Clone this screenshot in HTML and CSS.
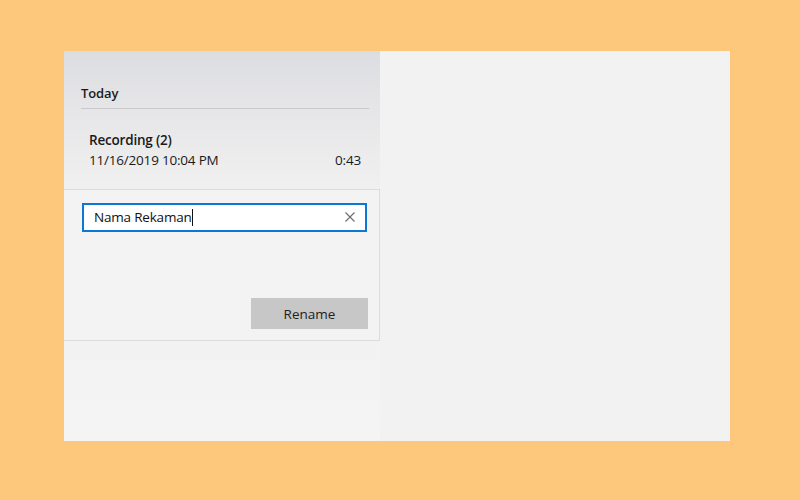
FILE: index.html
```html
<!DOCTYPE html>
<html lang="en">
<head>
    <meta charset="UTF-8">
    <title>Voice Recorder</title>
    <link rel="stylesheet" href="styles.css">
</head>
<body>
    <div class="window">
        <div class="sidebar">
            <div class="group-title">Today</div>
            <div class="recording">
                <div class="rec-name">Recording (2)</div>
                <div class="rec-meta">
                    <span>11/16/2019 10:04 PM</span>
                    <span>0:43</span>
                </div>
            </div>
        </div>
        <div class="main"></div>

        <div class="flyout">
            <div class="name-box">
                <span class="name-text">Nama Rekaman</span><span class="caret"></span>
                <svg class="clear" width="10" height="10" viewBox="0 0 10 10">
                    <path d="M0.5 0.5 L9.5 9.5 M9.5 0.5 L0.5 9.5" stroke="#6b6b6b" stroke-width="1.1"/>
                </svg>
            </div>
            <div class="actions">
                <button class="rename-btn">Rename</button>
            </div>
        </div>
    </div>
</body>
</html>
```

FILE: styles.css
```css
body {
    margin: 0;
    background-color: #fdc77c;
    font-family: "Segoe UI", "Open Sans", "Noto Sans", sans-serif;
    color: #1a1a1a;
}
.window {
    position: relative;
    display: flex;
    margin: 51px 0 0 64px;
    width: 666px;
    height: 390px;
    background: #f2f2f2;
}
.sidebar {
    width: 316px;
    background: linear-gradient(to bottom, #dcdde1 0px, #e6e6e8 60px, #f0f0f0 135px, #f4f4f4 390px);
    box-sizing: border-box;
    padding: 33px 11px 0 17px;
}
.main {
    flex: 1;
    background: #f2f2f2;
}
.group-title {
    font-size: 13px;
    font-weight: 600;
    letter-spacing: -0.1px;
    padding-bottom: 6px;
    border-bottom: 1px solid #c9c9cb;
    line-height: 18px;
}
.recording {
    padding: 21px 8px 0 8px;
}
.rec-name {
    font-size: 13.5px;
    font-weight: 600;
    letter-spacing: -0.2px;
    line-height: 20px;
}
.rec-meta {
    display: flex;
    justify-content: space-between;
    font-size: 13.5px;
    letter-spacing: -0.2px;
    line-height: 20px;
}
.flyout {
    position: absolute;
    left: 0;
    top: 138px;
    width: 316px;
    height: 152px;
    box-sizing: border-box;
    background: #f3f3f3;
    border: 1px solid #dcdcdc;
    border-left: none;
    padding: 13px 12px 0 18px;
}
.name-box {
    display: flex;
    align-items: center;
    height: 29px;
    box-sizing: border-box;
    border: 2px solid #0a78d4;
    background: #fff;
    padding: 0 10px 1px 10px;
    font-size: 13.5px;
    letter-spacing: -0.2px;
}
.name-text {
    color: #111;
}
.caret {
    width: 1px;
    height: 17px;
    background: #111;
}
.clear {
    margin-left: auto;
}
.actions {
    display: flex;
    justify-content: flex-end;
    margin-top: 66px;
}
.rename-btn {
    width: 117px;
    height: 31px;
    border: none;
    background: #c7c7c7;
    font-family: inherit;
    font-size: 13.5px;
    color: #222;
    margin-right: -1px;
}
```
